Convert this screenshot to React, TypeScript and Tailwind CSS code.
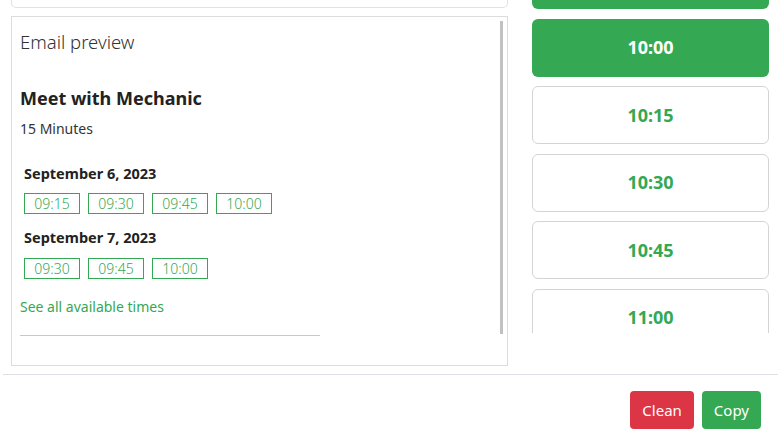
import React from "react";

const slots = [
  { date: "September 6, 2023", times: ["09:15", "09:30", "09:45", "10:00"] },
  { date: "September 7, 2023", times: ["09:30", "09:45", "10:00"] },
];

// first entry is scrolled out of view above the list
const picks = ["", "10:00", "10:15", "10:30", "10:45", "11:00"];
const selected = ["", "10:00"];

export default function App() {
  return (
    <div className="w-[781px] h-[448px] bg-white overflow-hidden text-[#212529] font-['Noto_Sans','Open_Sans',sans-serif]">
      <div className="flex gap-6 pl-[11px] pr-3 h-[366px]">
        {/* left column */}
        <div className="w-[497px] flex flex-col gap-[8px]">
          <div className="h-[8px] border-x border-b border-[#dee2e6] rounded-b-[5px]" />

          {/* Email preview */}
          <div className="h-[350px] border border-[#dcdcdc] flex pl-2 pr-[4px]">
            <div className="flex-1 flex flex-col pt-[13px]">
              <div className="text-[18.5px] leading-[24px] font-light text-[#333]">Email preview</div>
              <div className="mt-[31px] text-[18px] leading-[26px] font-bold text-[#222]">Meet with Mechanic</div>
              <div className="mt-[8px] text-[14px] leading-[20px] text-[#333]">15 Minutes</div>

              {slots.map((s, i) => (
                <div key={s.date} className="pl-1">
                  <div className={`${i === 0 ? "mt-[24px]" : "mt-[13px]"} text-[14.5px] leading-[20px] font-bold text-[#222]`}>
                    {s.date}
                  </div>
                  <div className={`${i === 0 ? "mt-[10px]" : "mt-[11px]"} flex gap-2`}>
                    {s.times.map((t) => (
                      <div
                        key={t}
                        className="w-[56px] h-[21px] border border-[#34a853] text-[#34a853] text-[14px] leading-[19px] text-center font-light"
                      >
                        {t}
                      </div>
                    ))}
                  </div>
                </div>
              ))}

              <div className="mt-[18px] text-[14px] leading-[20px] text-[#34a853]">See all available times</div>
              <div className="mt-[18px] h-px w-[300px] bg-[#c8c8c8]" />
            </div>
            {/* scrollbar */}
            <div className="w-[3px] h-[313px] mt-[4px] bg-[#c1c1c1]" />
          </div>
        </div>

        {/* right column: time picker, scrolled */}
        <div className="w-[237px] h-[333px] overflow-hidden">
          <div className="-mt-[49px] flex flex-col gap-[9.5px]">
            {picks.map((t, i) => {
              const on = selected.includes(t);
              return (
                <div
                  key={i}
                  className={
                    on
                      ? "h-[58px] rounded-[6px] bg-[#34a853] text-white flex items-center justify-center text-[18px] font-bold"
                      : "h-[58px] rounded-[6px] border border-[#d4d4d4] text-[#34a853] flex items-center justify-center text-[18px] font-bold"
                  }
                >
                  {t}
                </div>
              );
            })}
          </div>
        </div>
      </div>

      {/* footer */}
      <div className="mt-2 mx-[3px] h-px bg-[#dee2e6]" />
      <div className="flex justify-end gap-2 pr-5 pt-4">
        <button className="h-[38px] px-3 rounded-[4px] bg-[#dc3545] text-white text-[15px]">Clean</button>
        <button className="h-[38px] px-3 rounded-[4px] bg-[#34a853] text-white text-[15px]">Copy</button>
      </div>
    </div>
  );
}
